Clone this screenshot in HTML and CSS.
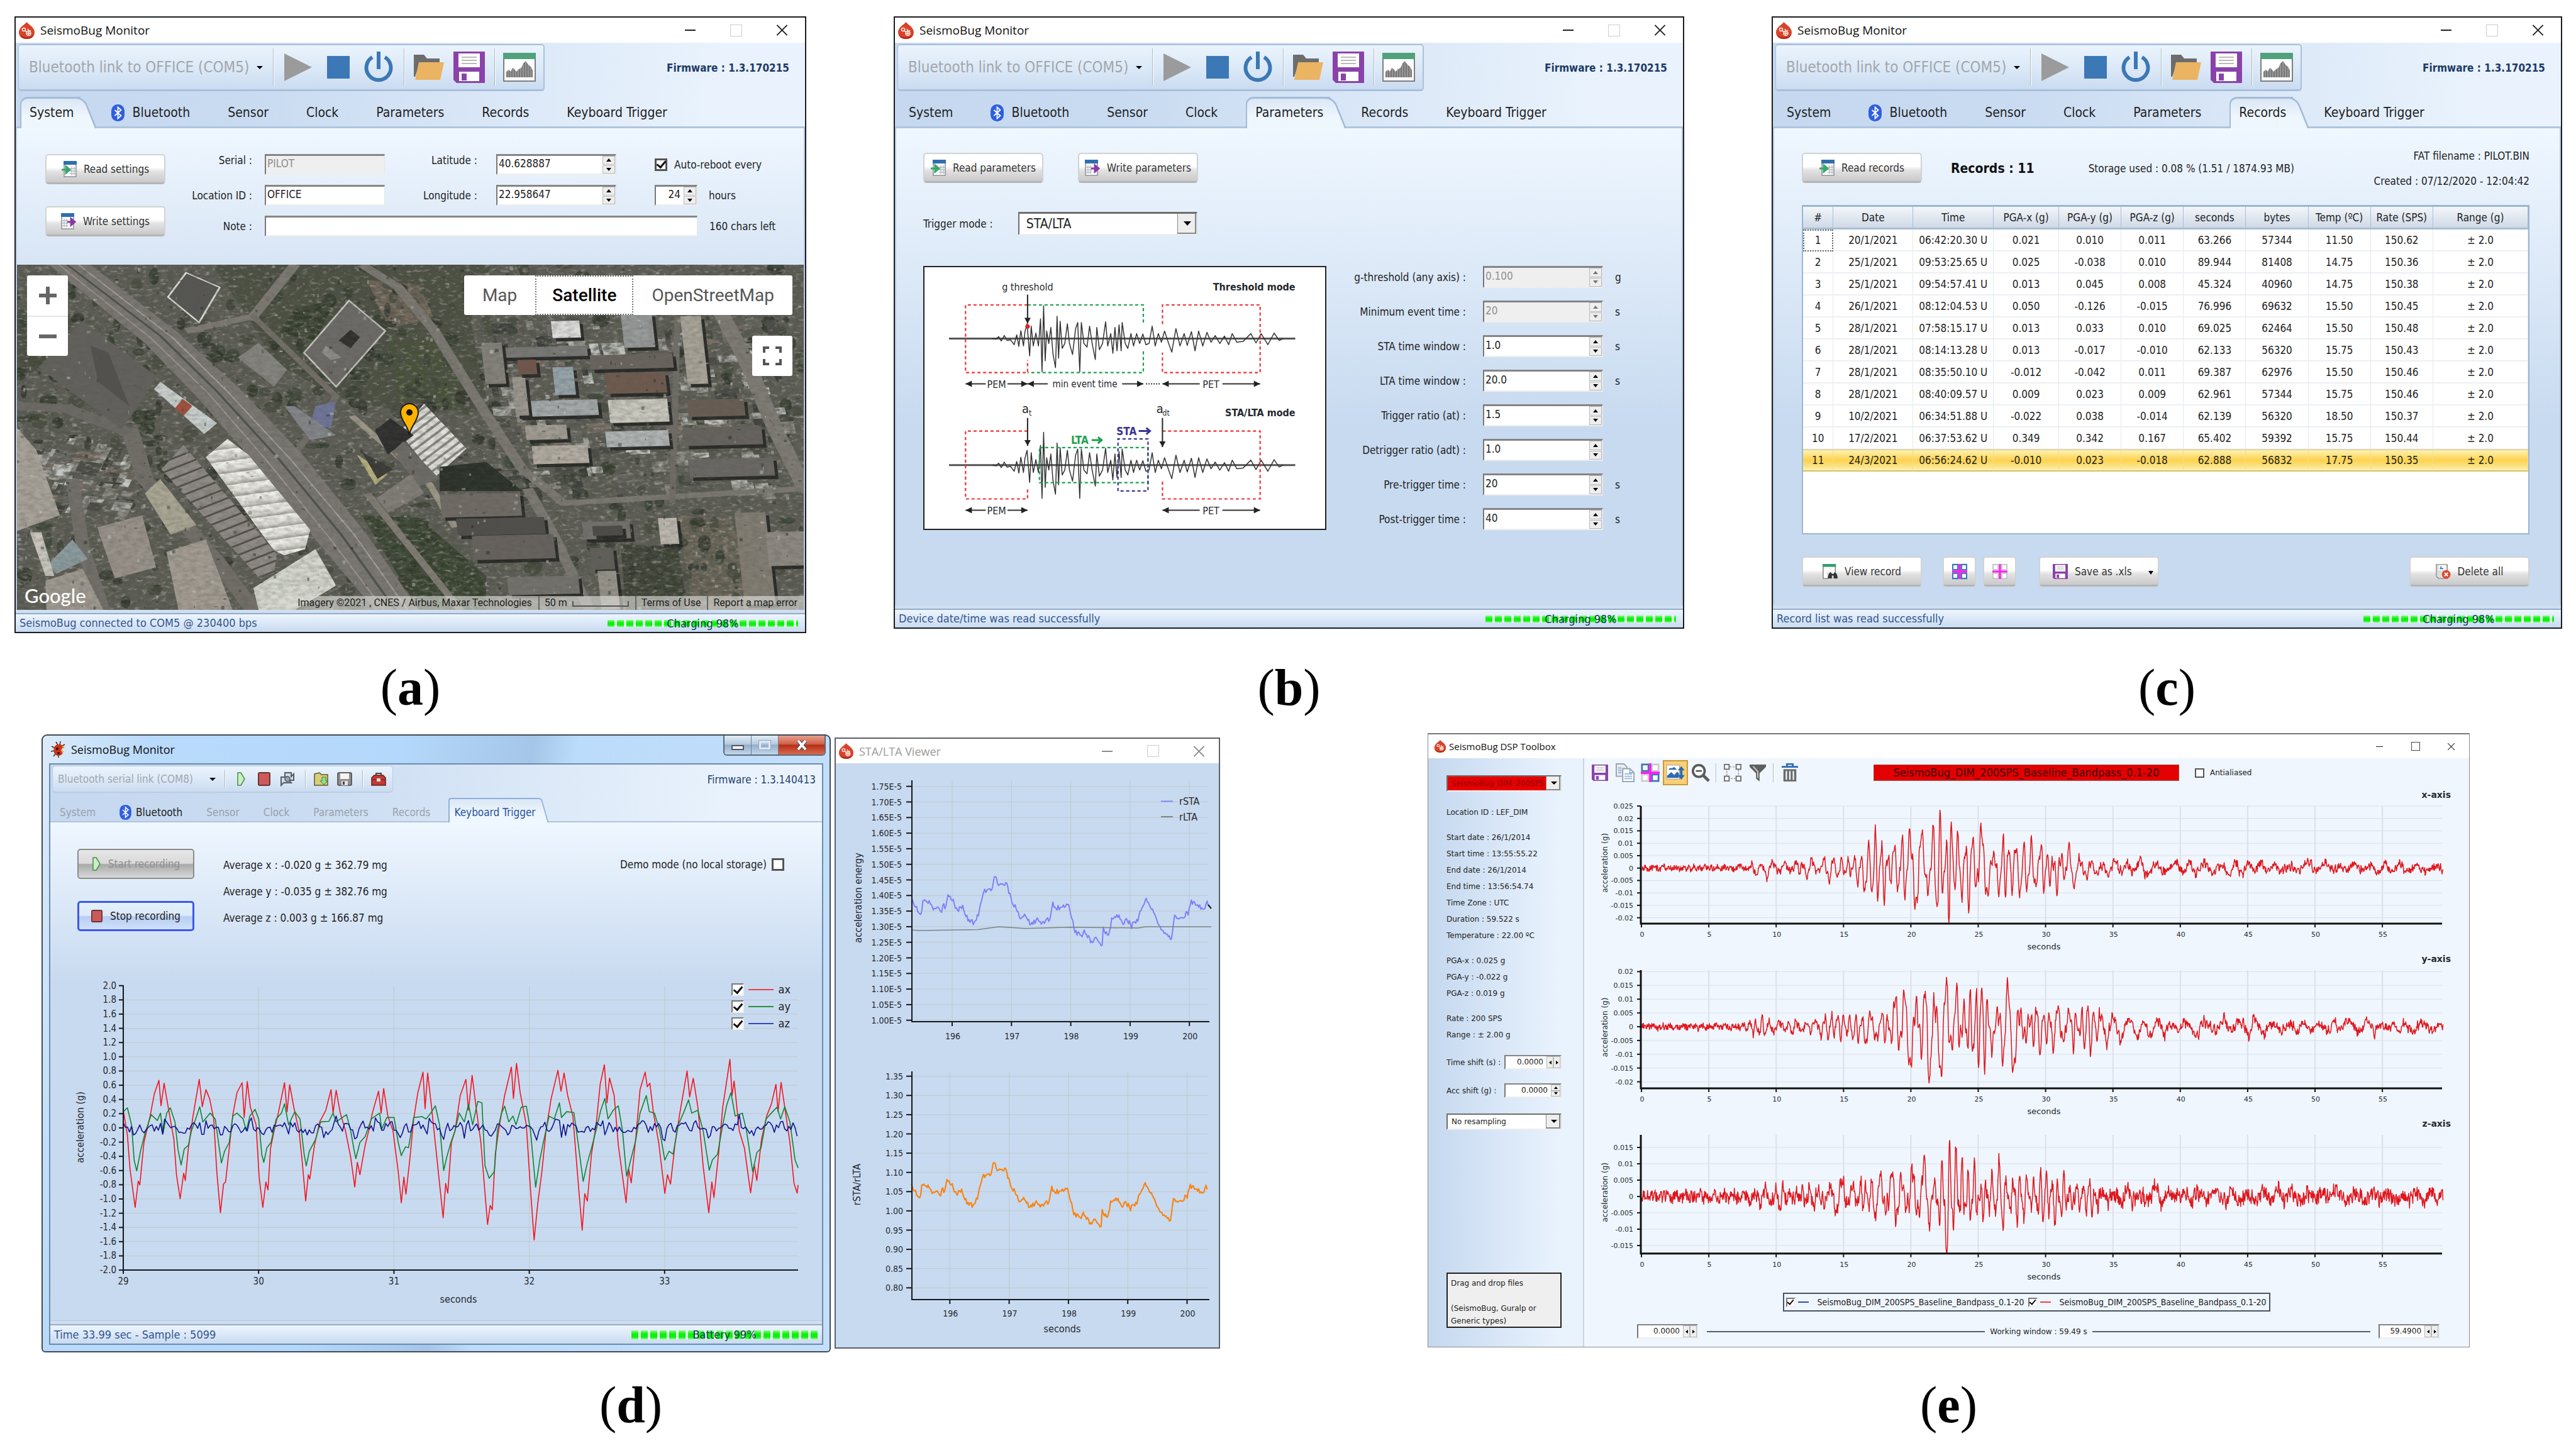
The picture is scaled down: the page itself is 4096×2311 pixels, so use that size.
FILE: index.html
```html
<!DOCTYPE html>
<html lang="en">
<head>
<meta charset="utf-8">
<title>SeismoBug software</title>
<link rel="stylesheet" href="styles.css">
</head>
<body>
<svg class="sprite" aria-hidden="true">
  <symbol id="i-logo" viewBox="0 0 27 27"><path d="M13.500 0C16 4 26 8 26 16.500C26 23 20.500 27 13.500 27S1 23 1 16.500C1 8 11 4 13.500 0Z" fill="#d8432a"/><path d="M2 19C5 26 22 26 25 19C24 24 20 27 13.500 27S3 24 2 19Z" fill="#b02c18"/><g fill="none" stroke="#ffe9e2" stroke-width="1.600"><circle cx="9" cy="12" r="2.500"/><circle cx="16.500" cy="18" r="3.500"/><path d="M11 14l3 2M15 11l2 3M20 13l-2 2M16.500 15v6M13.500 18h6"/></g></symbol>
  <symbol id="i-bug" viewBox="0 0 24 26"><path d="M8 1l3 5M15 0l-1 6M1 8l6 3M0 16l6-1M4 24l4-5M12 26v-4M22 5l-5 3" stroke="#4a2a18" stroke-width="1.500" fill="none"/><path d="M7 7c5-4 12-2 13 3c-4 2-5 5-1 9c-4 6-12 5-14-1c-1-4-1-8 2-11z" fill="#c8341c"/><circle cx="10" cy="12" r="2" fill="#2c0d05"/><circle cx="12" cy="19" r="2" fill="#2c0d05"/><path d="M18 8l3 3M16 14l4 3" stroke="#f0a030" stroke-width="2"/></symbol>
  <symbol id="i-bt" viewBox="0 0 21 27"><rect width="21" height="27" rx="10" fill="#2f5fe0"/><path d="M5.500 9l10 9-5 4.500V4.500l5 4.500-10 9" fill="none" stroke="#fff" stroke-width="1.800"/></symbol>
  <symbol id="i-play" viewBox="0 0 44 44"><path d="M0 0L44 22L0 44Z" fill="#9b9b9b"/></symbol>
  <symbol id="i-stop" viewBox="0 0 36 36"><rect width="36" height="36" fill="#3b78b5"/></symbol>
  <symbol id="i-power" viewBox="0 0 48 50"><path d="M14 9A19.500 19.500 0 1 0 34 9" fill="none" stroke="#3b78b5" stroke-width="6"/><path d="M24 0V28" stroke="#3b78b5" stroke-width="6"/></symbol>
  <symbol id="i-folder" viewBox="0 0 50 42"><path d="M1 1H17L22 7H42V16H10L3 36H1Z" fill="#6d6d6d"/><path d="M9 13H49L43 41H3Z" fill="#ebb462"/></symbol>
  <symbol id="i-floppy" viewBox="0 0 50 50"><path d="M0 0H50V50H5L0 45Z" fill="#8a42aa"/><rect x="8" y="3" width="34" height="22" fill="#fff"/><path d="M13 9H37M13 14H37M13 19H37" stroke="#bbb" stroke-width="2"/><rect x="9" y="32" width="32" height="15" fill="#fff"/><rect x="13" y="35" width="8" height="11" fill="#8a42aa"/></symbol>
  <symbol id="i-chart" viewBox="0 0 52 46"><rect x="1" y="1" width="50" height="44" fill="#fff" stroke="#7d7d7d" stroke-width="2"/><rect width="52" height="10" fill="#4fa27c"/><path d="M5 39V30L9 27L12 30L15 24L18 26L21 30L25 26L29 24L32 17L36 13L40 19L44 22L47 28V39Z" fill="#777"/><path d="M8 28V39M12 28V39M16 24V39M20 28V39M24 26V39M28 23V39M32 16V39M36 14V39M40 18V39M44 22V39" stroke="#b9b9b9" stroke-width="1"/></symbol>
  <symbol id="i-read" viewBox="0 0 24 26"><rect x="4" y="1" width="19" height="24" fill="#fff" stroke="#8a8f96" stroke-width="1.500"/><rect x="3" width="21" height="6" fill="#2f6eb0"/><path d="M16 9V23M20 9V23M13 12H22M13 16H22M13 20H22" stroke="#b7bcc2" stroke-width="1.300"/><path d="M0 14H9M7 9L13 14L7 19Z" stroke="#3aa66c" stroke-width="3" fill="#3aa66c"/></symbol>
  <symbol id="i-write" viewBox="0 0 24 26"><rect x="1" y="1" width="19" height="24" fill="#fff" stroke="#8a8f96" stroke-width="1.500"/><rect width="21" height="6" fill="#2f6eb0"/><path d="M5 9V23M9 9V23M2 12H11M2 16H11M2 20H11" stroke="#b7bcc2" stroke-width="1.300"/><path d="M10 14H18M16 9L22 14L16 19Z" stroke="#8a3aa6" stroke-width="3" fill="#8a3aa6"/></symbol>
  <symbol id="i-view" viewBox="0 0 26 26"><path d="M1 1H22V14M1 1V25H10" fill="#fff" stroke="#777" stroke-width="1.500"/><rect width="23" height="5" fill="#2f9e70"/><path d="M9 25C9 19 12 14 14 14L16 17H19L21 14C23 14 26 19 26 25H19V20H16V25Z" fill="#333"/></symbol>
  <symbol id="i-all" viewBox="0 0 26 26"><g fill="#fff" stroke="#3b78b5" stroke-width="2.500"><rect x="1" y="1" width="9" height="9"/><rect x="16" y="1" width="9" height="9"/><rect x="1" y="16" width="9" height="9"/><rect x="16" y="16" width="9" height="9"/></g><path d="M13 0V26M0 13H26" stroke="#ff1ef0" stroke-width="4"/></symbol>
  <symbol id="i-none" viewBox="0 0 26 26"><g fill="#fff" stroke="#c3c3c3" stroke-width="2"><rect x="1" y="1" width="9" height="9"/><rect x="16" y="1" width="9" height="9"/><rect x="1" y="16" width="9" height="9"/><rect x="16" y="16" width="9" height="9"/></g><path d="M13 0V26M0 13H26" stroke="#ff1ef0" stroke-width="3.500"/></symbol>
  <symbol id="i-del" viewBox="0 0 26 26"><path d="M1 1H20V25H5L1 21Z" fill="#ddd" stroke="#8c8c8c" stroke-width="1.500"/><rect x="5" y="2" width="12" height="9" fill="#fff"/><path d="M9 4v3M7 8h6" stroke="#3b78b5" stroke-width="2"/><circle cx="18" cy="18" r="7.500" fill="#d94a32"/><path d="M15 15L21 21M21 15L15 21" stroke="#fff" stroke-width="2"/></symbol>
  <symbol id="i-gplay" viewBox="0 0 14 22"><path d="M2 1L7 1L13 11L7 21H2Z" fill="#c9f0c0" stroke="#4c8a4c" stroke-width="1.500"/></symbol>
  <symbol id="i-rstop" viewBox="0 0 20 22"><rect x="1" y="1" width="18" height="20" rx="2" fill="#cc5a5a" stroke="#6a3434" stroke-width="2"/></symbol>
  <symbol id="i-link" viewBox="0 0 24 24"><path d="M8 2H18V8L22 4V14H14L18 18H6L2 22V9H8Z" fill="#d7dbe2" stroke="#555d68" stroke-width="2"/><circle cx="12" cy="12" r="4" fill="#9aa5b5" stroke="#47505c" stroke-width="1.500"/></symbol>
  <symbol id="i-open" viewBox="0 0 24 22"><path d="M1 3L9 1L12 4H22V21H1Z" fill="#d9cd78" stroke="#5f5a30" stroke-width="1.500"/><path d="M13 8V14H10L16 20L22 14H19V8Z" fill="#8fe08f" stroke="#3f7a3f"/></symbol>
  <symbol id="i-save" viewBox="0 0 24 22"><rect x="1" y="1" width="22" height="20" rx="2" fill="#8f8f8f" stroke="#444" stroke-width="1.500"/><rect x="5" y="2" width="14" height="9" fill="#f4f4f4"/><rect x="7" y="14" width="10" height="7" fill="#e4e4e4"/><rect x="9" y="15" width="3" height="5" fill="#444"/></symbol>
  <symbol id="i-tool" viewBox="0 0 24 22"><path d="M8 5V2H16V5" fill="none" stroke="#444" stroke-width="2"/><path d="M1 9L5 5H19L23 9V21H1Z" fill="#c23a32" stroke="#6b1d18" stroke-width="1.500"/><path d="M2 12H22" stroke="#6b1d18"/><rect x="9" y="10" width="6" height="5" fill="#ddd"/></symbol>
  <symbol id="i-copy" viewBox="0 0 32 32"><path d="M1 1H14L19 6V22H1Z" fill="#e9edf1" stroke="#9aa4ae" stroke-width="2"/><path d="M12 9H24L31 16V31H12Z" fill="#fff" stroke="#8fa0b2" stroke-width="2"/><path d="M24 9V16H31M15 18H28M15 22H28M15 26H28M4 8H10M4 12H10M4 16H10" fill="none" stroke="#93b4d6" stroke-width="2"/></symbol>
  <symbol id="i-quad" viewBox="0 0 32 32"><g fill="#fff" stroke-width="3"><rect x="2" y="2" width="11" height="11" stroke="#3b78b5"/><rect x="19" y="2" width="11" height="11" stroke="#ccc"/><rect x="2" y="19" width="11" height="11" stroke="#ccc"/><rect x="19" y="19" width="11" height="11" stroke="#3b78b5"/></g><path d="M16 0V32M0 16H32" stroke="#ff1ef0" stroke-width="4"/></symbol>
  <symbol id="i-fit" viewBox="0 0 32 28"><rect x="1" y="1" width="22" height="24" fill="#fff" stroke="#9a9a9a"/><path d="M2 23V19L9 13L14 18L19 12L22 15V23Z" fill="#2c6bb0"/><path d="M4 9C6 4 10 8 12 5C15 3 17 8 19 9Z" fill="#2c6bb0"/><path d="M26 3L32 10H28V18H32L26 26L20 18H24V10H20Z" fill="#2c6bb0"/></symbol>
  <symbol id="i-zoom" viewBox="0 0 32 32"><circle cx="13" cy="13" r="10" fill="#fff" stroke="#5c5c5c" stroke-width="4"/><path d="M8 13H18" stroke="#5c5c5c" stroke-width="3"/><path d="M20 20L30 30" stroke="#5c5c5c" stroke-width="5"/></symbol>
  <symbol id="i-nodes" viewBox="0 0 30 30"><path d="M5 5H25V25H5Z" fill="none" stroke="#8a8a8a" stroke-width="1.500" stroke-dasharray="3 2"/><g fill="#fff" stroke="#6f6f6f" stroke-width="2"><rect x="1" y="1" width="8" height="8"/><rect x="21" y="1" width="8" height="8"/><rect x="1" y="21" width="8" height="8"/><rect x="21" y="21" width="8" height="8"/></g></symbol>
  <symbol id="i-filter" viewBox="0 0 28 30"><path d="M0 1H28V5L17 16V30L11 25V16L0 5Z" fill="#5f5f5f"/><path d="M6 4L14 13V24" fill="none" stroke="#cfcfcf" stroke-width="2"/></symbol>
  <symbol id="i-trash" viewBox="0 0 28 32"><path d="M0 6H28M9 5V1H19V5" fill="none" stroke="#2c6bb0" stroke-width="3"/><path d="M3 10H25V31H3Z" fill="#6a6a6a"/><path d="M8 13V28M14 13V28M20 13V28" stroke="#eef5fd" stroke-width="2.500"/></symbol>
</svg>

<main class="page">
<div class="row top">

<figure class="fig">
  <section class="win">
    <header class="title"><svg class="logo"><use href="#i-logo"/></svg><h2>SeismoBug Monitor</h2>
      <div class="ctl"><button class="c-min" aria-label="Minimize"></button><button class="c-max" aria-label="Maximize" disabled></button><button class="c-x" aria-label="Close"></button></div></header>
    <div class="head">
      <div class="headline">
        <div class="tools"><span class="pick"><select aria-label="Port" disabled><option>Bluetooth link to OFFICE (COM5)</option></select></span><i class="sep"></i>
          <button aria-label="Play"><svg width="44" height="44"><use href="#i-play"/></svg></button><button aria-label="Stop"><svg width="36" height="36"><use href="#i-stop"/></svg></button><button aria-label="Power"><svg width="48" height="50"><use href="#i-power"/></svg></button><i class="sep"></i>
          <button aria-label="Open"><svg width="50" height="42"><use href="#i-folder"/></svg></button><button aria-label="Save"><svg width="50" height="50"><use href="#i-floppy"/></svg></button><i class="sep"></i>
          <button aria-label="Chart"><svg width="52" height="46"><use href="#i-chart"/></svg></button></div>
        <b class="fw">Firmware : 1.3.170215</b>
      </div>
      <nav class="tabs"><button class="on">System</button><button><svg class="bt"><use href="#i-bt"/></svg>Bluetooth</button><button>Sensor</button><button>Clock</button><button>Parameters</button><button>Records</button><button>Keyboard Trigger</button></nav>
    </div>
    <form class="panel sys">
      <div class="acts"><button type="button" class="btn"><svg class="ic"><use href="#i-read"/></svg>Read settings</button><button type="button" class="btn"><svg class="ic"><use href="#i-write"/></svg>Write settings</button></div>
      <div class="form">
        <label class="up" for="serial">Serial :</label><input id="serial" class="box" value="PILOT" disabled>
        <label class="up mid" for="lat">Latitude :</label><span class="spin"><input id="lat" value="40.628887"><span class="arr"><button type="button" aria-label="Up"></button><button type="button" aria-label="Down"></button></span></span>
        <label class="check"><input type="checkbox" checked>Auto-reboot every</label>
        <label for="loc">Location ID :</label><input id="loc" class="box" value="OFFICE">
        <label class="mid" for="lon">Longitude :</label><span class="spin"><input id="lon" value="22.958647"><span class="arr"><button type="button" aria-label="Up"></button><button type="button" aria-label="Down"></button></span></span>
        <div class="hours"><span class="spin small"><input id="hrs" value="24"><span class="arr"><button type="button" aria-label="Up"></button><button type="button" aria-label="Down"></button></span></span><label for="hrs">hours</label></div>
        <label for="note">Note :</label><div class="noterow"><input id="note" class="box"><span>160 chars left</span></div>
      </div>
    </form>
    <div class="map">
      <svg id="sat" viewBox="23 17 1521 1423" preserveAspectRatio="none" role="img" aria-label="Satellite map"></svg>
      <div class="zoomer"><button aria-label="Zoom in" class="plus"></button><button aria-label="Zoom out" class="minus"></button></div>
      <div class="types"><button>Map</button><button class="cur">Satellite</button><button>OpenStreetMap</button></div>
      <button class="full" aria-label="Full screen"><svg viewBox="0 0 30 30"><path d="M2 10V2H10M20 2H28V10M28 20V28H20M10 28H2V20" fill="none" stroke="#555" stroke-width="4"/></svg></button>
      <svg class="pin" viewBox="0 0 32 52"><path d="M16 51C15 38 2 28 2 15A14 14 0 0 1 30 15C30 28 17 38 16 51Z" fill="#ffb300" stroke="#1a1a1a" stroke-width="2"/><circle cx="16" cy="15" r="5" fill="#111"/></svg>
      <span class="goog">Google</span>
      <div class="attr"><span>Imagery ©2021 , CNES / Airbus, Maxar Technologies</span><span class="scale">50 m<i></i></span><a href="#terms">Terms of Use</a><a href="#report">Report a map error</a></div>
    </div>
    <footer class="status"><span>SeismoBug connected to COM5 @ 230400 bps</span><div class="meter"><b>Charging 98%</b></div></footer>
  </section>
  <figcaption>(<b>a</b>)</figcaption>
</figure>

<figure class="fig">
  <section class="win">
    <header class="title"><svg class="logo"><use href="#i-logo"/></svg><h2>SeismoBug Monitor</h2>
      <div class="ctl"><button class="c-min" aria-label="Minimize"></button><button class="c-max" aria-label="Maximize" disabled></button><button class="c-x" aria-label="Close"></button></div></header>
    <div class="head">
      <div class="headline">
        <div class="tools"><span class="pick"><select aria-label="Port" disabled><option>Bluetooth link to OFFICE (COM5)</option></select></span><i class="sep"></i>
          <button aria-label="Play"><svg width="44" height="44"><use href="#i-play"/></svg></button><button aria-label="Stop"><svg width="36" height="36"><use href="#i-stop"/></svg></button><button aria-label="Power"><svg width="48" height="50"><use href="#i-power"/></svg></button><i class="sep"></i>
          <button aria-label="Open"><svg width="50" height="42"><use href="#i-folder"/></svg></button><button aria-label="Save"><svg width="50" height="50"><use href="#i-floppy"/></svg></button><i class="sep"></i>
          <button aria-label="Chart"><svg width="52" height="46"><use href="#i-chart"/></svg></button></div>
        <b class="fw">Firmware : 1.3.170215</b>
      </div>
      <nav class="tabs"><button>System</button><button><svg class="bt"><use href="#i-bt"/></svg>Bluetooth</button><button>Sensor</button><button>Clock</button><button class="on">Parameters</button><button>Records</button><button>Keyboard Trigger</button></nav>
    </div>
    <form class="panel par">
      <div class="acts"><button type="button" class="btn"><svg class="ic"><use href="#i-read"/></svg>Read parameters</button><button type="button" class="btn"><svg class="ic"><use href="#i-write"/></svg>Write parameters</button></div>
      <div class="mode"><label for="tm">Trigger mode :</label><span class="drop"><select id="tm"><option>STA/LTA</option></select></span></div>
      <div class="split">
        <svg id="diagram" class="diagram" viewBox="49 399 637 416" role="img" aria-label="Trigger modes"></svg>
        <div class="values" id="values">
          <label for="p1">g-threshold (any axis) :</label><span class="spin off"><input id="p1" value="0.100" disabled><span class="arr"><button type="button" aria-label="Up"></button><button type="button" aria-label="Down"></button></span></span><span>g</span>
          <label for="p2">Minimum event time :</label><span class="spin off"><input id="p2" value="20" disabled><span class="arr"><button type="button" aria-label="Up"></button><button type="button" aria-label="Down"></button></span></span><span>s</span>
          <label for="p3">STA time window :</label><span class="spin"><input id="p3" value="1.0"><span class="arr"><button type="button" aria-label="Up"></button><button type="button" aria-label="Down"></button></span></span><span>s</span>
          <label for="p4">LTA time window :</label><span class="spin"><input id="p4" value="20.0"><span class="arr"><button type="button" aria-label="Up"></button><button type="button" aria-label="Down"></button></span></span><span>s</span>
          <label for="p5">Trigger ratio (at) :</label><span class="spin"><input id="p5" value="1.5"><span class="arr"><button type="button" aria-label="Up"></button><button type="button" aria-label="Down"></button></span></span><span></span>
          <label for="p6">Detrigger ratio (adt) :</label><span class="spin"><input id="p6" value="1.0"><span class="arr"><button type="button" aria-label="Up"></button><button type="button" aria-label="Down"></button></span></span><span></span>
          <label for="p7">Pre-trigger time :</label><span class="spin"><input id="p7" value="20"><span class="arr"><button type="button" aria-label="Up"></button><button type="button" aria-label="Down"></button></span></span><span>s</span>
          <label for="p8">Post-trigger time :</label><span class="spin"><input id="p8" value="40"><span class="arr"><button type="button" aria-label="Up"></button><button type="button" aria-label="Down"></button></span></span><span>s</span>
        </div>
      </div>
    </form>
    <footer class="status"><span>Device date/time was read successfully</span><div class="meter"><b>Charging 98%</b></div></footer>
  </section>
  <figcaption>(<b>b</b>)</figcaption>
</figure>

<figure class="fig">
  <section class="win">
    <header class="title"><svg class="logo"><use href="#i-logo"/></svg><h2>SeismoBug Monitor</h2>
      <div class="ctl"><button class="c-min" aria-label="Minimize"></button><button class="c-max" aria-label="Maximize" disabled></button><button class="c-x" aria-label="Close"></button></div></header>
    <div class="head">
      <div class="headline">
        <div class="tools"><span class="pick"><select aria-label="Port" disabled><option>Bluetooth link to OFFICE (COM5)</option></select></span><i class="sep"></i>
          <button aria-label="Play"><svg width="44" height="44"><use href="#i-play"/></svg></button><button aria-label="Stop"><svg width="36" height="36"><use href="#i-stop"/></svg></button><button aria-label="Power"><svg width="48" height="50"><use href="#i-power"/></svg></button><i class="sep"></i>
          <button aria-label="Open"><svg width="50" height="42"><use href="#i-folder"/></svg></button><button aria-label="Save"><svg width="50" height="50"><use href="#i-floppy"/></svg></button><i class="sep"></i>
          <button aria-label="Chart"><svg width="52" height="46"><use href="#i-chart"/></svg></button></div>
        <b class="fw">Firmware : 1.3.170215</b>
      </div>
      <nav class="tabs"><button>System</button><button><svg class="bt"><use href="#i-bt"/></svg>Bluetooth</button><button>Sensor</button><button>Clock</button><button>Parameters</button><button class="on">Records</button><button>Keyboard Trigger</button></nav>
    </div>
    <div class="panel rec">
      <div class="rechead"><button class="btn"><svg class="ic"><use href="#i-read"/></svg>Read records</button><b class="count">Records : 11</b><span class="used">Storage used : 0.08 % (1.51 / 1874.93 MB)</span><div class="fat"><span>FAT filename : PILOT.BIN</span><span>Created : 07/12/2020 - 12:04:42</span></div></div>
      <div class="grid"><table>
        <colgroup><col style="width:4.2%"><col style="width:11%"><col style="width:11.1%"><col style="width:9%"><col style="width:8.6%"><col style="width:8.6%"><col style="width:8.6%"><col style="width:8.6%"><col style="width:8.6%"><col style="width:8.6%"><col></colgroup>
        <thead><tr><th>#</th><th>Date</th><th>Time</th><th>PGA-x (g)</th><th>PGA-y (g)</th><th>PGA-z (g)</th><th>seconds</th><th>bytes</th><th>Temp (ºC)</th><th>Rate (SPS)</th><th>Range (g)</th></tr></thead>
        <tbody>
        <tr><td class="focus">1</td><td>20/1/2021</td><td>06:42:20.30 U</td><td>0.021</td><td>0.010</td><td>0.011</td><td>63.266</td><td>57344</td><td>11.50</td><td>150.62</td><td>± 2.0</td></tr>
        <tr><td>2</td><td>25/1/2021</td><td>09:53:25.65 U</td><td>0.025</td><td>-0.038</td><td>0.010</td><td>89.944</td><td>81408</td><td>14.75</td><td>150.36</td><td>± 2.0</td></tr>
        <tr><td>3</td><td>25/1/2021</td><td>09:54:57.41 U</td><td>0.013</td><td>0.045</td><td>0.008</td><td>45.324</td><td>40960</td><td>14.75</td><td>150.38</td><td>± 2.0</td></tr>
        <tr><td>4</td><td>26/1/2021</td><td>08:12:04.53 U</td><td>0.050</td><td>-0.126</td><td>-0.015</td><td>76.996</td><td>69632</td><td>15.50</td><td>150.45</td><td>± 2.0</td></tr>
        <tr><td>5</td><td>28/1/2021</td><td>07:58:15.17 U</td><td>0.013</td><td>0.033</td><td>0.010</td><td>69.025</td><td>62464</td><td>15.50</td><td>150.48</td><td>± 2.0</td></tr>
        <tr><td>6</td><td>28/1/2021</td><td>08:14:13.28 U</td><td>0.013</td><td>-0.017</td><td>-0.010</td><td>62.133</td><td>56320</td><td>15.75</td><td>150.43</td><td>± 2.0</td></tr>
        <tr><td>7</td><td>28/1/2021</td><td>08:35:50.10 U</td><td>-0.012</td><td>-0.042</td><td>0.011</td><td>69.387</td><td>62976</td><td>15.50</td><td>150.46</td><td>± 2.0</td></tr>
        <tr><td>8</td><td>28/1/2021</td><td>08:40:09.57 U</td><td>0.009</td><td>0.023</td><td>0.009</td><td>62.961</td><td>57344</td><td>15.75</td><td>150.46</td><td>± 2.0</td></tr>
        <tr><td>9</td><td>10/2/2021</td><td>06:34:51.88 U</td><td>-0.022</td><td>0.038</td><td>-0.014</td><td>62.139</td><td>56320</td><td>18.50</td><td>150.37</td><td>± 2.0</td></tr>
        <tr><td>10</td><td>17/2/2021</td><td>06:37:53.62 U</td><td>0.349</td><td>0.342</td><td>0.167</td><td>65.402</td><td>59392</td><td>15.75</td><td>150.44</td><td>± 2.0</td></tr>
        <tr class="sel"><td>11</td><td>24/3/2021</td><td>06:56:24.62 U</td><td>-0.010</td><td>0.023</td><td>-0.018</td><td>62.888</td><td>56832</td><td>17.75</td><td>150.35</td><td>± 2.0</td></tr>
        </tbody></table></div>
      <div class="recfoot"><button class="btn"><svg class="ic"><use href="#i-view"/></svg>View record</button><button class="btn sq first" aria-label="Select all"><svg class="ic"><use href="#i-all"/></svg></button><button class="btn sq" aria-label="Select none"><svg class="ic"><use href="#i-none"/></svg></button><button class="btn more"><svg class="ic"><use href="#i-floppy"/></svg>Save as .xls<i class="tri"></i></button><button class="btn last"><svg class="ic"><use href="#i-del"/></svg>Delete all</button></div>
    </div>
    <footer class="status"><span>Record list was read successfully</span><div class="meter"><b>Charging 98%</b></div></footer>
  </section>
  <figcaption>(<b>c</b>)</figcaption>
</figure>
</div>

<div class="row bottom">
<figure class="fig">
  <div class="pair">
  <section class="aero">
    <header class="title"><svg class="logo"><use href="#i-bug"/></svg><h2>SeismoBug Monitor</h2><div class="actl"><button aria-label="Minimize"><i class="a-min"></i></button><button aria-label="Maximize"><i class="a-max"></i></button><button class="a-x" aria-label="Close"><svg viewBox="0 0 16 16"><path d="M2 1L14 15M14 1L2 15" stroke="#445" stroke-width="6"/><path d="M2 1L14 15M14 1L2 15" stroke="#fff" stroke-width="4"/></svg></button></div></header>
    <div class="inner">
      <div class="head">
        <div class="headline">
          <div class="tools"><span class="pick"><select aria-label="Port" disabled><option>Bluetooth serial link (COM8)</option></select></span><i class="sep"></i>
            <button aria-label="Play"><svg width="14" height="22"><use href="#i-gplay"/></svg></button><button aria-label="Stop"><svg width="20" height="22"><use href="#i-rstop"/></svg></button><button aria-label="Link"><svg width="24" height="24"><use href="#i-link"/></svg></button><i class="sep"></i>
            <button aria-label="Open"><svg width="24" height="22"><use href="#i-open"/></svg></button><button aria-label="Save"><svg width="24" height="22"><use href="#i-save"/></svg></button><i class="sep"></i>
            <button aria-label="Toolbox"><svg width="24" height="22"><use href="#i-tool"/></svg></button></div>
          <span class="fw">Firmware : 1.3.140413</span>
        </div>
        <nav class="tabs"><button class="dim">System</button><button><svg class="bt"><use href="#i-bt"/></svg>Bluetooth</button><button class="dim">Sensor</button><button class="dim">Clock</button><button class="dim">Parameters</button><button class="dim">Records</button><button class="on">Keyboard Trigger</button></nav>
      </div>
      <div class="panel key">
        <div class="keytop">
          <div class="acts"><button class="btn gray" disabled><svg width="14" height="24"><use href="#i-gplay"/></svg>Start recording</button><button class="btn blue"><svg width="18" height="20"><use href="#i-rstop"/></svg>Stop recording</button></div>
          <div class="avgs"><span>Average x : -0.020 g ± 362.79 mg</span><span>Average y : -0.035 g ± 382.76 mg</span><span>Average z : 0.003 g ± 166.87 mg</span></div>
          <label class="check demo">Demo mode (no local storage)<input type="checkbox"></label>
        </div>
        <div class="chartbox"><svg id="key" viewBox="14 386 1227 546" role="img" aria-label="Acceleration"></svg>
          <div class="legend"><label><input type="checkbox" checked><i class="l-red"></i>ax</label><label><input type="checkbox" checked><i class="l-green"></i>ay</label><label><input type="checkbox" checked><i class="l-blue"></i>az</label></div></div>
      </div>
      <footer class="status"><span>Time 33.99 sec - Sample : 5099</span><div class="meter"><b>Battery 99%</b></div></footer>
    </div>
  </section>
  <section class="win sta">
    <header class="title"><svg class="logo"><use href="#i-logo"/></svg><h2>STA/LTA Viewer</h2><div class="ctl"><button class="c-min" aria-label="Minimize"></button><button class="c-max" aria-label="Maximize" disabled></button><button class="c-x" aria-label="Close"></button></div></header>
    <svg id="sta" viewBox="2 41 609 929" role="img" aria-label="STA and LTA"></svg>
  </section>
  </div>
  <figcaption>(<b>d</b>)</figcaption>
</figure>

<figure class="fig">
  <section class="win dsp">
    <header class="title"><svg class="logo"><use href="#i-logo"/></svg><h2>SeismoBug DSP Toolbox</h2><div class="ctl"><button class="c-min" aria-label="Minimize"></button><button class="c-max" aria-label="Maximize"></button><button class="c-x" aria-label="Close"></button></div></header>
    <div class="dspbody">
      <aside>
        <span class="drop red"><select aria-label="Record"><option>SeismoBug_DIM_200SPS_</option></select></span>
        <p>Location ID : LEF_DIM</p>
        <p>Start date : 26/1/2014<br>Start time : 13:55:55.22<br>End date : 26/1/2014<br>End time : 13:56:54.74<br>Time Zone : UTC<br>Duration : 59.522 s<br>Temperature : 22.00 ºC</p>
        <p>PGA-x : 0.025 g<br>PGA-y : -0.022 g<br>PGA-z : 0.019 g</p>
        <p>Rate : 200 SPS<br>Range : ± 2.00 g</p>
        <div class="shift"><label for="ts">Time shift (s) :</label><span class="spin side"><input id="ts" value="0.0000"><span class="arr"><button aria-label="Less"></button><button aria-label="More"></button></span></span></div>
        <div class="shift"><label for="as">Acc shift (g) :</label><span class="spin"><input id="as" value="0.0000"><span class="arr"><button aria-label="Up"></button><button aria-label="Down"></button></span></span></div>
        <span class="drop res"><select aria-label="Resampling"><option>No resampling</option></select></span>
        <div class="dnd">Drag and drop files<br><br>(SeismoBug, Guralp or<br>Generic types)</div>
      </aside>
      <div class="dspmain">
        <div class="dsptools"><button aria-label="Save"><svg width="26" height="26"><use href="#i-floppy"/></svg></button><button aria-label="Copy"><svg width="30" height="30"><use href="#i-copy"/></svg></button><button aria-label="Grid"><svg width="30" height="30"><use href="#i-quad"/></svg></button><button class="act" aria-label="Fit"><svg width="30" height="26"><use href="#i-fit"/></svg></button><button aria-label="Zoom out"><svg width="30" height="30"><use href="#i-zoom"/></svg></button><i class="sep"></i><button aria-label="Select"><svg width="28" height="28"><use href="#i-nodes"/></svg></button><button aria-label="Filter"><svg width="26" height="28"><use href="#i-filter"/></svg></button><i class="sep"></i><button aria-label="Delete"><svg width="26" height="30"><use href="#i-trash"/></svg></button>
          <span class="redbar">SeismoBug_DIM_200SPS_Baseline_Bandpass_0.1-20</span><label class="check"><input type="checkbox">Antialiased</label></div>
        <svg id="dsp" viewBox="249 86 1407 794" role="img" aria-label="Acceleration records"></svg>
        <div class="dsplegend"><label><input type="checkbox" checked><i class="l-blue"></i>SeismoBug_DIM_200SPS_Baseline_Bandpass_0.1-20</label><label><input type="checkbox" checked><i class="l-red"></i>SeismoBug_DIM_200SPS_Baseline_Bandpass_0.1-20</label></div>
        <div class="range"><span class="spin side"><input aria-label="From" value="0.0000"><span class="arr"><button aria-label="Less"></button><button aria-label="More"></button></span></span><i></i><span>Working window : 59.49 s</span><i></i><span class="spin side"><input aria-label="To" value="59.4900"><span class="arr"><button aria-label="Less"></button><button aria-label="More"></button></span></span></div>
      </div>
    </div>
  </section>
  <figcaption>(<b>e</b>)</figcaption>
</figure>
</div>
</main>
<script src="charts.js"></script>
</body>
</html>
```

FILE: styles.css
```css
* { box-sizing: border-box; }
body { margin: 0; background: #fff; color: #222; font: 17px/20px "DejaVu Sans Condensed", "DejaVu Sans", sans-serif; }
button, input, select { font: inherit; color: inherit; margin: 0; padding: 0; border: 0; background: none; border-radius: 0; }
button svg, .title svg { display: block; flex: none; }
i { font-style: normal; }
.sprite { position: absolute; width: 0; height: 0; }
.page { min-height: 100vh; }

/* figure rows */
.row { display: grid; }
.top { grid-template-columns: 1259fr 1257fr 1257fr; column-gap: 139px; padding: 26px 22px 0 23px; }
.bottom { grid-template-columns: 1874fr 1657fr; column-gap: 330px; padding: 22px 169px 0 66px; }
.pair { display: grid; grid-template-columns: 1255fr 613fr; column-gap: 6px; align-items: start; padding-top: 2px; }
.fig { margin: 0; display: flex; flex-direction: column; min-width: 0; }
figcaption { margin-top: auto; padding-top: 37px; text-align: center; font: 82px/100px "Liberation Serif", serif; color: #000; }
.bottom figcaption { padding-top: 34px; }

/* window chrome */
.win { border: 2px solid #1b1d20; background: #fff; display: flex; flex-direction: column; min-width: 0; }
.title { height: 40px; display: flex; align-items: center; padding-left: 4px; gap: 8px; background: #fff; }
.title h2 { margin: 0; font: 19px/24px "Open Sans", sans-serif; color: #111; flex: 1; white-space: nowrap; }
.logo { width: 27px; height: 27px; }
.ctl { display: flex; align-self: stretch; }
.ctl button { width: 73px; display: grid; place-items: center; }
.c-min::before { content: ""; width: 17px; height: 2px; background: #222; }
.c-max::before { content: ""; width: 17px; height: 17px; border: 1px solid #ccc; }
.c-x::before, .c-x::after { content: ""; grid-area: 1/1; width: 23px; height: 2px; background: #222; transform: rotate(45deg); }
.c-x::after { transform: rotate(-45deg); }

.head { background: linear-gradient(90deg, #c5d8ef 0, #c9dbf1 30%, #eaf3fd 90%); padding-top: 2px; }
.headline { display: flex; align-items: center; justify-content: space-between; padding: 0 25px 0 4px; }
.tools { display: flex; align-items: center; height: 75px; padding: 0 6px 0 16px; border: 1px solid #a9c0dc; border-width: 2px 2px 3px 1px; border-radius: 5px; background: linear-gradient(#ebf4fd, #dce9f7 50%, #cbdcf1); }
.tools button { width: 64px; display: grid; place-items: center; }
.sep { width: 2px; height: 60px; margin: 0 6px 0 8px; background: #adb6c0; border-right: 1px solid #fff; }
.pick, .drop { position: relative; display: block; }
.pick select { width: 380px; font-size: 24px; line-height: 30px; color: #a3a6ab; opacity: 1; appearance: none; display: block; }
.pick::after, .drop::after { content: ""; position: absolute; right: 8px; top: 50%; margin-top: -2px; border: 5px solid transparent; border-top-color: #000; border-bottom: 0; pointer-events: none; }
.fw { color: #1d3a66; white-space: nowrap; }

.tabs { display: flex; margin-top: 9px; height: 50px; padding-left: 7px; border-bottom: 3px solid #afc5dd; }
.tabs button { position: relative; z-index: 0; height: 50px; padding: 0 45px 0 15px; font-size: 21px; color: #222; display: flex; align-items: center; gap: 12px; white-space: nowrap; }
.bt { width: 21px; height: 27px; }
.tabs .on::before { content: ""; position: absolute; z-index: -1; inset: 0 34px 0 0; background: linear-gradient(#dbe7f5, #eef6fe 60%); border: 2px solid #a3bbd6; border-top-width: 3px; border-right: 0; border-bottom: 0; border-radius: 12px 0 0 0; }
.tabs .on::after { content: ""; position: absolute; z-index: -1; top: 0; bottom: 0; right: 18px; width: 36px; background: linear-gradient(#dbe7f5, #eef6fe 60%); border: 3px solid #a3bbd6; border-left: 0; border-bottom: 0; border-radius: 0 14px 0 0; transform: skewX(22deg); }

.panel { background: linear-gradient(#eff7ff, #c8daf0 62%); margin: 0; border: 1px solid #b4c8e0; border-width: 0 2px; flex: 1; }
.btn { width: 191px; height: 48px; display: flex; align-items: center; justify-content: center; gap: 11px; white-space: nowrap; border: 2px solid #d2d2d2; border-bottom: 3px solid #b5b5b5; border-radius: 5px; background: linear-gradient(#fff 45%, #e2e2e2 60%, #c9c9c9); color: #333; }
.ic { width: 24px; height: 26px; }
.box { width: 100%; min-width: 0; height: 33px; background: #fff; border: 2px solid #777; border-width: 3px 1px 2px 2px; border-color: #858585 #e6e6e6 #eee #777; padding: 0 2px 4px; }
.box:disabled { background: #efefef; color: #8d8d8d; }
.spin { display: flex; width: 191px; height: 33px; background: #fff; border: 2px solid #777; border-width: 3px 2px 2px 2px; border-color: #858585 #e6e6e6 #eee #777; }
.spin input { flex: 1; min-width: 0; padding: 0 2px 5px; }
.spin.off { background: #efefef; color: #909090; }
.arr { display: flex; flex-direction: column; width: 20px; gap: 1px; }
.arr button { flex: 1; background: #eee; border: 1px solid #b8b8b8; display: grid; place-items: center; }
.arr button::before { content: ""; border: 4px solid transparent; border-top: 0; border-bottom: 5px solid #000; }
.arr button + button::before { transform: rotate(180deg); }
.off .arr button::before { opacity: .5; }
input[type=checkbox] { appearance: none; width: 20px; height: 20px; background: #fff; border: 3px solid #555; flex: none; display: grid; place-items: center; }
input[type=checkbox]:checked::before { content: ""; width: 6px; height: 11px; border: solid #111; border-width: 0 3px 3px 0; transform: rotate(40deg); margin-top: -3px; }
.check { display: flex; align-items: center; gap: 11px; white-space: nowrap; }

.status { display: flex; align-items: center; justify-content: space-between; height: 30px; padding: 0 11px 0 6px; margin-top: 5px; background: linear-gradient(#edf5fe, #c9dbf1); border-top: 2px solid #94abc8; outline: 5px solid #cfdff1; outline-offset: 0; clip-path: inset(-5px 0 0 0); color: #34568e; font-size: 18px; white-space: nowrap; }
.meter { position: relative; width: 303px; height: 11px; background: linear-gradient(rgba(255, 255, 255, .55), transparent 40% 75%, rgba(255, 255, 255, .5)), repeating-linear-gradient(90deg, #0cf20c 0 11px, #dcf3e4 11px 15px); color: #123c5c; }
.meter b { position: absolute; inset: -4px 0; text-align: center; line-height: 20px; font-size: 18px; font-weight: normal; }

/* system */
.sys { background: linear-gradient(#eff7ff, #d8e5f5); height: 217px; flex: none; padding: 41px 0 0 45px; display: flex; }
.sys .acts { display: flex; flex-direction: column; gap: 35px; }
.form { flex: 1; display: grid; grid-template-columns: 138px 191px 137px 191px 1fr; gap: 16px 20px; align-content: start; align-items: center; }
.form > label { text-align: right; white-space: nowrap; }
.form .mid { padding-right: 10px; }
.form .up { align-self: start; }
.form .check { padding-left: 41px; }
.hours { display: flex; align-items: center; gap: 18px; padding-left: 41px; }
.small { width: 68px; }
.small input { text-align: right; padding-right: 5px; }
.noterow { grid-column: 2 / 6; display: flex; align-items: center; gap: 19px; white-space: nowrap; }
.noterow .box { width: 688px; }

/* map */
.map { position: relative; height: 549px; border: 1px solid #b4c8e0; border-width: 0 2px; overflow: hidden; font-family: Roboto, sans-serif; }
#sat { display: block; width: 100%; height: 100%; }
.zoomer { position: absolute; left: 16px; top: 17px; width: 65px; background: #fff; border-radius: 3px; }
.zoomer button { display: grid; place-items: center; width: 65px; height: 64px; }
.zoomer .minus { border-top: 2px solid #e6e6e6; }
.plus::before, .minus::before { content: ""; grid-area: 1/1; width: 28px; height: 6px; background: #666; }
.plus::after { content: ""; grid-area: 1/1; width: 6px; height: 28px; background: #666; }
.types { position: absolute; right: 18px; top: 17px; height: 63px; background: #fff; display: flex; border-radius: 3px; font-size: 28px; }
.types button { padding: 0 29px; color: #565656; }
.types .cur { padding: 0 25px; color: #000; font-weight: 500; border: 2px dotted #777; }
.full { position: absolute; right: 18px; top: 113px; width: 64px; height: 64px; background: #fff; border-radius: 3px; padding: 17px; }
.pin { position: absolute; left: 608px; top: 219px; width: 32px; height: 54px; }
.goog { position: absolute; left: 12px; bottom: 6px; color: #fff; font: 500 31px/34px Lato, sans-serif; }
.attr { position: absolute; right: 0; bottom: 0; height: 22px; padding: 0 10px; display: flex; gap: 10px; background: linear-gradient(90deg, transparent, rgba(225, 225, 220, .62) 12%); padding-left: 70px; font-size: 16px; line-height: 22px; color: #222; white-space: nowrap; }
.attr > * + * { border-left: 2px solid #666; padding-left: 8px; color: inherit; text-decoration: none; }
.scale { display: flex; gap: 8px; }
.scale i { width: 90px; height: 9px; margin-top: 8px; border: 2px solid #555; border-top: 0; }

/* parameters */
.par { padding: 39px 0 120px 43px; }
.par .acts { display: flex; gap: 55px; }
.mode { display: flex; align-items: center; gap: 40px; margin-top: 46px; }
.drop { width: 285px; height: 37px; background: #fff; border: 2px solid #777; border-width: 3px 2px 2px 2px; border-color: #6e6e6e #e0e0e0 #eee #6e6e6e; }
.drop select { appearance: none; width: 100%; height: 100%; padding-left: 11px; font-size: 21px; display: block; }
.drop::after { right: 8px; margin-top: -4px; border-width: 7px 6px 0; z-index: 1; }
.drop::before { content: ""; position: absolute; right: 0; top: 0; bottom: 0; width: 27px; background: #eee; border: 2px solid #888; border-width: 0 2px 2px 1px; pointer-events: none; }
.split { display: flex; margin-top: 49px; }
.diagram { flex: none; width: 641px; height: 420px; background: #fff; border: 2px solid #222; }
.values { flex: 1; display: grid; grid-template-columns: 222px 191px 1fr; grid-auto-rows: 35px; row-gap: 20px; column-gap: 27px; align-items: center; text-align: right; white-space: nowrap; }
.values .spin { height: 35px; }
.values > span:nth-child(3n) { text-align: left; margin-left: -8px; }

/* records */
.rec { padding: 39px 48px 30px 44px; }
.rechead { display: flex; height: 83px; align-items: flex-start; }
.rechead > * + * { line-height: 50px; white-space: nowrap; }
.count { font-size: 21px; color: #111; margin-left: 46px; }
.used { margin-left: 86px; }
.rechead .fat { margin-left: auto; margin-top: -5px; display: grid; row-gap: 20px; line-height: 20px; text-align: right; }
.grid { height: 524px; background: #fff; border: 2px solid #9bb5d2; border-top-width: 3px; }
table { width: 100%; table-layout: fixed; border-collapse: separate; border-spacing: 0; text-align: center; }
th { font-weight: normal; height: 36px; padding: 0; background: linear-gradient(#f3f6fa, #cfd9e6); border-right: 1px solid #a9bdd4; border-bottom: 3px solid #a9bdd4; white-space: nowrap; }
td { height: 35px; padding: 0; border-right: 1px solid #e4e8ee; border-bottom: 2px solid #eceff3; white-space: nowrap; }
td.focus { outline: 2px dotted #666; outline-offset: -2px; }
.sel td { background: linear-gradient(#fdf3b4, #fdd24e 50%, #fbe384 80%, #fdf3b4); border-top: 1px solid #d8bd60; border-bottom: 2px solid #d8bd60; border-right-color: #f4dd8d; }
.recfoot { display: flex; margin-top: 35px; }
.sq { width: 53px; margin-left: 11px; }
.sq.first { margin-left: 33px; }
.more { margin-left: 36px; position: relative; justify-content: flex-start; padding-left: 20px; }
.tri { position: absolute; right: 7px; top: 21px; border: 4px solid transparent; border-top: 6px solid #000; border-bottom: 0; }
.last { margin-left: auto; }

/* keyboard trigger */
.aero { border: 2px solid #3f4b57; border-radius: 9px 9px 6px 6px; padding: 0 10px 10px; background: linear-gradient(100deg, #dcebfa 0, #b9dafb 12%, #b4d8fb 40%, #a5c6e8 55%, #bcdcfb 60%, #c4dffa 100%); min-width: 0; }
.aero .title { height: 44px; background: none; padding-left: 3px; }
.aero .logo { width: 24px; height: 26px; }
.aero .title h2 { font-size: 18px; }
.actl { display: flex; align-self: flex-start; height: 32px; border: 2px solid #5a6a7c; border-top: 0; border-radius: 0 0 6px 6px; overflow: hidden; margin-right: -4px; }
.actl button { width: 43px; background: linear-gradient(#e3edf7, #b6cadf 45%, #94aec9 50%, #c3d6ea); border-right: 1px solid #6d7f93; display: grid; place-items: center; }
.actl .a-x { width: 73px; border: 0; background: linear-gradient(#e6a08f, #cf6048 45%, #b52e17 50%, #d86b50); }
.a-x svg { width: 16px; height: 16px; }
.a-min { width: 20px; height: 8px; background: #fff; border: 2px solid #556; margin-top: 8px; }
.a-max { width: 18px; height: 14px; border: 3px solid #dde8f4; outline: 1px solid #93a8bf; }
.inner { border: 2px solid #6d8ba9; background: #c8daf0; }
.aero .headline { padding: 0 10px 0 3px; }
.aero .tools { height: 43px; padding: 0 4px 0 8px; border-width: 1px 1px 2px; border-color: #b9cce2; }
.aero .tools button { width: 37px; }
.aero .sep { height: 28px; margin: 0 5px 0 10px; }
.aero .pick select { width: 255px; font-size: 17px; line-height: 22px; }
.aero .pick::after { right: 4px; }
.aero .fw { color: #24406f; }
.aero .tabs { margin-top: 8px; height: 39px; padding-left: 6px; border-bottom-width: 2px; }
.aero .tabs button { height: 39px; padding: 6px 29px 0 9px; font-size: 17px; gap: 7px; }
.aero .bt { width: 19px; height: 24px; }
.tabs .dim { color: #9aa1aa; }
.aero .tabs .on { color: #2450a0; }
.aero .tabs .on::before { inset: 0 25px 0 0; border-color: #8db0dd; border-radius: 4px 0 0 0; border-top-width: 2px; }
.aero .tabs .on::after { right: 14px; width: 20px; border-width: 2px; border-color: #8db0dd; border-radius: 0 5px 0 0; transform: skewX(16deg); }
.key { background: linear-gradient(#eff7ff, #c8daf0 32%); border-width: 0 0 2px; }
.keytop { display: flex; align-items: flex-start; padding: 42px 60px 0 43px; height: 246px; white-space: nowrap; }
.keytop .acts { display: flex; flex-direction: column; gap: 35px; }
.key .btn { width: 186px; gap: 12px; }
.gray { background: linear-gradient(#e6e6e6, #dadada 48%, #a9a9a9 52%, #d8d8d8); border-color: #8b8b8b; border-bottom-width: 2px; color: #8f8f8f; }
.blue { background: linear-gradient(#e3f1fb, #dbe9fa 48%, #b7cdf2 52%, #cfe0fa); border: 3px solid #3d57e8; color: #222; }
.avgs { display: grid; row-gap: 22px; margin: 16px auto 0 46px; }
.demo { margin-top: 15px; gap: 8px; }
.chartbox { position: relative; }
.chartbox svg, .sta > svg, .dspmain > svg { display: block; width: 100%; }
.legend { position: absolute; top: 10px; right: 50px; display: grid; row-gap: 7px; }
.legend label { display: flex; align-items: center; gap: 7px; font-size: 18px; }
.legend i { width: 40px; height: 2px; }
.legend input[type=checkbox], .dsplegend input[type=checkbox] { border: 2px solid #777; border-right-color: #eee; border-bottom-color: #eee; }
.l-red { background: #f04040; }
.l-green { background: #2a8f3a; }
.l-blue { background: #3a44b0; }
.inner .status { margin-top: 4px; height: 31px; }
.inner .meter { width: 296px; height: 14px; margin-right: -4px; }
.inner .meter b { inset: -3px 0; }

/* viewer */
.sta { margin-top: 5px; border-color: #5c6167; background: #c8daf0; }
.sta .title { height: 39px; }
.sta .title h2 { font-size: 18px; color: #9a9a9a; }
.sta .logo { width: 25px; height: 25px; }
.sta .c-min::before, .sta .c-x::before, .sta .c-x::after { background: #8c8c8c; }
.sta .ctl { margin-right: -5px; }

/* charts */
svg text { font-family: "DejaVu Sans Condensed", "DejaVu Sans", sans-serif; fill: #26292e; }
#dsp text { font-family: "DejaVu Sans", sans-serif; }
.ax { stroke: #14181d; stroke-width: 2; fill: none; }
.gl { stroke: #bfc9cb; stroke-width: 1; fill: none; }

/* toolbox */
.dsp { border: 1px solid #8b8b8b; border-top: 2px solid #777; }
.dsp .title { height: 38px; padding-left: 9px; gap: 4px; }
.dsp .title h2 { font-size: 15px; }
.dsp .logo { width: 20px; height: 20px; }
.dsp .ctl button { width: 57px; }
.dsp .c-min::before { width: 11px; height: 1px; }
.dsp .c-max::before { width: 12px; height: 12px; border-color: #444; }
.dsp .c-x::before, .dsp .c-x::after { width: 15px; height: 1px; }
.dspbody { display: flex; font-size: 12px; font-family: "DejaVu Sans", sans-serif; }
aside { width: 248px; flex: none; padding: 27px 34px 30px 29px; display: flex; flex-direction: column; background: linear-gradient(90deg, #c5d8ef, #e9f3fe 85%); border-right: 2px solid #cdd3da; white-space: nowrap; }
aside .drop { width: auto; height: 26px; border-width: 2px; }
aside .drop select { font-size: 12px; padding-left: 6px; }
aside .drop::before { width: 20px; }
aside .drop::after { right: 5px; border-width: 5px 5px 0; margin-top: -3px; }
.red { margin-bottom: 6px; }
.red select { background: #e60000; color: #8a0808; }
aside p { margin: 14px 0 0; line-height: 26px; }
.shift { display: flex; align-items: center; justify-content: space-between; margin-top: 22px; }
p + .shift { margin-top: 19px; }
.dsp .spin { width: 91px; height: 23px; border-width: 2px; }
.dsp .spin input { text-align: right; padding: 0 5px 1px; }
.dsp .arr { width: 15px; gap: 0; }
.dsp .arr button::before { border-width: 0 3px 4px; }
.dsp .side .arr { flex-direction: row; width: 22px; }
.dsp .side .arr button::before { transform: rotate(-90deg); }
.dsp .side .arr button + button::before { transform: rotate(90deg); }
.res { margin-top: 25px; }
.dnd { margin-top: auto; height: 88px; padding: 5px 5px 0; line-height: 20px; background: #efefef; border: 2px solid #222; }
.dspmain { flex: 1; min-width: 0; background: #eff6fe; display: flex; flex-direction: column; }
.dsptools { display: flex; align-items: center; height: 46px; padding-left: 5px; white-space: nowrap; }
.dsptools button { width: 40px; height: 40px; display: grid; place-items: center; flex: none; }
.dsptools .act { background: #fbcf74; border: 2px solid #c99a3c; }
.dsptools .sep { height: 30px; margin: 0 5px 0 4px; flex: none; }
.redbar { width: 486px; height: 26px; margin-left: 113px; text-align: center; background: #e30000; border: 1px solid #a44; color: #3d0505; font: 18px/24px "DejaVu Sans Condensed", sans-serif; }
.dsptools .check { margin-left: 25px; gap: 9px; }
.dsp input[type=checkbox] { width: 15px; height: 15px; border-width: 2px; }
.dsp input[type=checkbox]:checked::before { width: 4px; height: 8px; border-width: 0 2px 2px 0; }
.dsplegend { align-self: center; display: flex; gap: 6px; margin-top: 10px; padding: 0 5px 0 3px; height: 30px; align-items: center; border: 2px solid #4a5360; font: 14px/20px "DejaVu Sans Condensed", sans-serif; white-space: nowrap; }
.dsplegend label { display: flex; align-items: center; gap: 4px; }
.dsplegend i { width: 17px; height: 2px; margin-right: 10px; }
.range { display: flex; align-items: center; margin: 20px 47px 13px 84px; white-space: nowrap; }
.range .spin { width: 97px; }
.range > i { flex: 1; height: 2px; background: #555e6a; margin: 0 8px 0 14px; }
.range > i + span + i { margin: 0 13px 0 8px; }
```

FILE: charts.js
```js
function rng(seed) {
  return function () {
    seed = (seed * 1664525 + 1013904223) % 4294967296;
    return seed / 4294967296;
  };
}
function put(id, html) { document.getElementById(id).innerHTML = html; }
function text(x, y, s, size, anchor, extra) {
  return `<text x="${x}" y="${y}" font-size="${size}" text-anchor="${anchor || 'middle'}" ${extra || ''}>${s}</text>`;
}
function turned(x, y, s, size) {
  return `<text transform="translate(${x} ${y}) rotate(-90)" font-size="${size}" text-anchor="middle">${s}</text>`;
}
function line(x1, y1, x2, y2, cls) { return `<path class="${cls}" d="M${x1} ${y1}L${x2} ${y2}"/>`; }
function trace(pts, color, width) {
  return `<polyline points="${pts.map(p => p[0].toFixed(1) + ',' + p[1].toFixed(1)).join(' ')}" fill="none" stroke="${color}" stroke-width="${width}" stroke-linejoin="round"/>`;
}
function pairs(list) {
  const out = [];
  for (let i = 0; i < list.length; i += 2) out.push([list[i], list[i + 1]]);
  return out;
}
function interp(pts, x) {
  for (let i = 1; i < pts.length; i++) {
    if (x <= pts[i][0]) {
      const a = pts[i - 1], b = pts[i];
      return a[1] + (b[1] - a[1]) * (x - a[0]) / (b[0] - a[0]);
    }
  }
  return pts[pts.length - 1][1];
}

/* Three-component live recording */
(function () {
  let s = '';
  for (let i = 0; i <= 20; i++) {
    const y = 399.7 + i * 22.62, v = (2 - i * 0.2);
    if (i > 0 && i < 20) s += line(130, y, 1203, y, 'gl');
    s += line(123, y, 130, y, 'ax') + text(119, y + 5, (Math.abs(v) < 0.01 ? 0 : v).toFixed(1), 15, 'end');
  }
  for (let i = 0; i < 5; i++) {
    const x = 130 + i * 215.2;
    if (i) s += line(x, 400, x, 852, 'gl');
    s += line(x, 852, x, 858, 'ax') + text(x, 875, 29 + i, 15);
  }
  const map = l => pairs(l).map(p => [p[0] * 0.8217 - 17.9, p[1] * 0.46604 + 369.4]);
  const ax = [180,490,188,575,193,690,203,822,209,732,212,745,220,600,232,510,240,435,249,388,253,475,259,398,268,490,278,590,283,710,290,792,297,705,300,730,306,620,315,510,327,385,333,478,340,420,347,450,355,520,361,700,368,840,374,742,378,735,385,620,392,505,400,430,410,396,414,515,420,392,426,480,437,540,443,720,450,822,456,735,460,762,465,620,472,560,480,500,492,396,497,495,502,403,510,480,520,560,526,660,533,800,538,710,541,725,550,610,560,530,572,490,582,420,586,500,592,422,600,500,610,560,620,650,628,752,633,668,638,710,648,610,655,560,662,500,674,425,679,500,684,416,692,510,702,560,712,700,718,806,723,718,727,777,735,650,742,520,750,430,760,360,764,485,769,363,776,470,786,640,799,857,804,740,808,773,815,600,822,560,832,440,843,385,848,490,855,371,862,470,872,600,885,880,890,815,894,830,900,640,908,540,918,440,931,343,935,450,941,330,948,430,960,540,968,760,975,933,982,810,990,700,998,560,1008,450,1021,354,1027,425,1033,363,1040,440,1050,510,1060,730,1068,900,1073,775,1078,800,1086,640,1095,540,1103,400,1111,335,1116,465,1121,380,1130,440,1138,610,1153,806,1158,690,1163,738,1172,580,1180,420,1190,360,1194,410,1199,398,1206,500,1216,600,1228,774,1233,710,1239,742,1248,600,1257,500,1271,356,1276,445,1283,381,1292,480,1302,680,1313,840,1319,735,1323,788,1332,640,1340,480,1354,316,1358,440,1362,390,1372,560,1382,620,1394,772,1401,675,1406,730,1415,590,1425,510,1434,470,1443,402,1447,495,1453,395,1460,480,1470,600,1478,740,1484,773,1486,745];
  const ay = [180,495,188,482,196,540,201,660,206,697,214,625,222,570,234,505,246,525,252,500,257,570,264,500,271,482,280,530,286,625,292,677,298,622,306,610,312,560,322,510,328,478,334,530,348,500,358,520,365,610,370,670,376,630,385,600,392,510,400,500,412,520,418,560,425,510,435,487,442,520,448,640,452,668,458,618,466,600,476,520,486,500,492,468,500,540,512,495,522,520,530,640,534,680,540,630,552,590,562,530,578,528,586,500,592,530,604,515,612,505,620,560,626,620,630,655,638,600,648,580,660,520,676,500,680,555,690,515,704,515,712,600,718,645,726,615,732,618,742,515,758,512,766,520,775,500,784,475,792,540,800,696,806,650,814,600,822,560,830,500,840,530,848,470,856,540,866,460,874,465,880,680,888,722,898,700,904,560,912,500,918,476,926,530,934,510,940,540,950,480,960,476,968,560,978,753,986,660,994,590,1004,510,1014,520,1024,465,1028,515,1038,495,1052,498,1060,600,1070,733,1078,670,1086,620,1096,550,1104,490,1112,450,1118,520,1128,490,1138,475,1146,560,1154,715,1162,660,1172,590,1180,500,1192,440,1198,495,1208,500,1218,560,1228,660,1236,630,1244,640,1254,540,1264,500,1274,455,1280,500,1292,490,1302,560,1314,695,1320,660,1330,640,1340,540,1348,470,1356,430,1364,510,1378,500,1386,560,1398,700,1406,635,1414,620,1424,520,1434,500,1445,480,1452,520,1460,478,1470,530,1480,660,1486,687];
  const r = rng(7), az = [];
  const dips = [206,292,370,452,534,630,718,800,888,978,1070,1154,1228,1314,1398,1484];
  for (let x = 180; x <= 1486; x += 4) {
    let y = 547 + (r() - 0.5) * 26 + Math.sin(x / 4.3) * 10;
    dips.forEach(d => {
      if (Math.abs(x - d) < 9) y += 38 * (1 - Math.abs(x - d) / 9);
      if (Math.abs(x - d - 46) < 14) y += (r() - 0.5) * 50;
    });
    az.push(x, y);
  }
  s += trace(map(ax), '#f5141e', 1.6) + trace(map(ay), '#118330', 1.6) + trace(map(az), '#10138f', 1.6);
  s += line(130, 399, 130, 853, 'ax') + line(129, 852, 1203, 852, 'ax');
  s += text(663, 904, 'seconds', 16) + turned(67, 625, 'acceleration (g)', 16);
  put('key', s);
})();

/* STA/LTA viewer */
(function () {
  let s = '';
  for (let i = 0; i <= 15; i++) {
    const y = 77.7 + i * 24.8;
    s += line(124, y, 594, y, 'gl') + line(114, y, 123, y, 'ax') + text(107, y + 5, (1.75 - i * 0.05).toFixed(2) + 'E-5', 14, 'end');
  }
  for (let i = 0; i <= 11; i++) {
    const y = 538.7 + i * 30.6;
    s += line(124, y, 594, y, 'gl') + line(114, y, 123, y, 'ax') + text(109, y + 5, (1.35 - i * 0.05).toFixed(2), 14, 'end');
  }
  for (let i = 0; i < 5; i++) {
    const a = 187 + i * 94.3, b = 183.3 + i * 94.3;
    s += line(a, 68, a, 451, 'gl') + line(a, 452, a, 459, 'ax') + text(a + 1, 480, 196 + i, 14);
    s += line(b, 532, b, 893, 'gl') + line(b, 894, b, 901, 'ax') + text(b + 1, 921, 196 + i, 14);
  }
  const k = pairs([320,435,338,452,352,475,362,430,380,435,402,458,420,450,432,458,436,440,446,458,456,424,472,432,490,458,512,450,530,480,545,485,560,490,575,460,592,412,612,408,626,408,630,368,652,398,676,388,690,420,716,455,738,482,746,462,768,493,800,482,824,493,845,475,853,442,880,455,916,445,940,508,964,525,974,505,1000,535,1022,525,1044,542,1046,505,1070,518,1080,480,1108,470,1122,493,1138,480,1155,498,1180,480,1195,450,1212,432,1245,465,1268,510,1290,520,1308,532,1320,475,1338,475,1374,465,1380,438,1410,445,1436,458,1444,435,1450,445]);
  const r = rng(3), up = [], low = [];
  for (let x = 320; x <= 1450; x += 4) {
    const y = interp(k, x) + (r() - 0.5) * 14;
    up.push([x * 0.41697 - 9.75, y * 0.64386 - 20.2]);
    low.push([(x - 4) * 0.41697 - 9.75, (1075 + (y - 368) * 0.93) * 0.64386 - 20.2]);
  }
  const lta = pairs([320,507,350,508,570,506,650,499,750,503,920,500,1180,502,1210,499,1460,499]).map(p => [p[0] * 0.41697 - 9.75, p[1] * 0.64386 - 20.2]);
  s += trace(up, '#8080f8', 2) + trace(lta, '#7e8488', 1.5) + trace(low, '#f98412', 2.2);
  s += line(594, 266, 599, 272, 'ax');
  s += line(123, 68, 123, 453, 'ax') + line(122, 452, 596, 452, 'ax') + line(123, 531, 123, 895, 'ax') + line(122, 894, 596, 894, 'ax');
  s += '<path d="M519 101.500H538" stroke="#8484f4" stroke-width="2"/><path d="M519 126H538" stroke="#7e8488" stroke-width="2"/>';
  s += text(548, 107, 'rSTA', 16, 'start') + text(548, 132, 'rLTA', 16, 'start');
  s += text(362, 946, 'seconds', 16) + turned(43, 255, 'acceleration energy', 16) + turned(41, 711, 'rSTA/rLTA', 16);
  put('sta', s);
})();

/* Filtered record, three axes */
(function () {
  let s = '';
  const charts = [
    { top: 116, base: 303, zero: 214.7, step: 19.75, hi: 5, lo: -4, name: 'x-axis', seed: 11,
      env: [0,1,6,1.2,9,3,9.6,6,10.5,3,12,4,14,7,15,6,16,8,17,14,18,17,19,14,20,20,21,15,22,21,22.7,29,23.4,18,24.5,19,25.2,20,26,10,27.5,19,29,12,30.5,14,32,9,34,7,36.4,8,39,4.5,42,6,44.5,6,46,3.5,50,5,52,4,59.5,3] },
    { top: 377, base: 565, zero: 467, step: 21.9, hi: 4, lo: -4, name: 'y-axis', seed: 23,
      env: [0,1.2,6,1.3,9,4,12,3.5,14,6,16,7,18,9,19,15,20.5,19,21.8,23,23,16,24,14,25.1,26,26,16,27.5,18,29,13,30,10,31,9,32,11,33.5,10,34.5,13,36,6,38.5,8,40,4,42.5,8,44,5,46.5,6,49,4,53,5,59.5,2.5] },
    { top: 639, base: 827.7, zero: 737, step: 26, hi: 3, lo: -3, name: 'z-axis', seed: 37,
      env: [0,1.2,6,2.2,9,4,12,4,14,6,16,6,17,7,18.8,14,20,14,21,12,22.8,22,24,14,26,8,27,13,29,7,31,11,32.5,8,34,5,36,5,38,7,40,4,44,4,50,4,59.5,2.5] }
  ];
  charts.forEach(c => {
    const z = c.seed === 37;
    for (let i = c.lo; i <= c.hi; i++) {
      const y = c.zero - i * c.step;
      s += `<path d="M341 ${y}H1613" stroke="#dde0e8"/>` + line(333, y, 339, y, 'ax') + text(327, y + 4, String(+(i * 0.005).toFixed(3)), 11, 'end');
    }
    for (let i = 0; i < 12; i++) {
      const x = 340 + i * 107.1;
      if (i) s += `<path d="M${x} ${c.top}V${c.base}" stroke="#dde0e8" stroke-width="2"/>`;
      s += line(x, c.base, x, c.base + 6, 'ax') + text(x + 1, c.base + 21, i * 5, 11);
    }
    const r = rng(c.seed), env = pairs(c.env), pts = [];
    let ph = 0, f = 1.8, ph2 = 1, amp = 1, target = 1, prev = 0;
    for (let t = 0; t < 59.5; t += 0.035) {
      const e = interp(env, t), late = t > 34;
      f += (r() - 0.5) * 0.6;
      f = Math.max(late ? 0.5 : 1, Math.min(late ? 1.3 : 2.5, f));
      ph += f * 0.035 * 6.283;
      ph2 += (3 + r() * 2) * 0.035 * 6.283;
      const q = Math.sin(ph), sign = q > 0 ? 1 : 0;
      if (sign !== prev) { target = 0.2 + r() * 0.8; prev = sign; }
      amp += (target - amp) * 0.4;
      const noise = (r() - 0.5) * (z ? 4 : 2.4) + (r() - 0.5) * (late ? 1.6 : 0);
      const v = e * (q * amp + Math.sin(ph2) * (0.14 + r() * 0.12)) * (t < 8 ? 0.5 : late ? 0.6 : 0.95) + noise;
      const y = c.zero - v / 5 * c.step;
      pts.push([340 + t * 21.42, Math.max(c.top, Math.min(c.base - 1, y))]);
    }
    s += trace(pts, '#e0161c', 1.5);
    s += `<path d="M339 ${c.top}V${c.base}H1613" fill="none" stroke="#111" stroke-width="3"/>`;
    s += text(980, c.base + 41, 'seconds', 13) + text(1627, c.top - 13, c.name, 14, 'end', 'font-weight="bold"') + turned(286, (c.top + c.base) / 2 - 3, 'acceleration (g)', 12);
  });
  put('dsp', s);
})();

/* Trigger mode diagram */
(function () {
  const X = x => +(x * 0.8217 - 11.4).toFixed(1), Y = y => +(y * 0.39245 + 377.8).toFixed(1);
  const wave = pairs([205,0,212,3,217,-8,222,10,228,-12,233,8,240,5,247,25,252,-15,256,32,260,-32,265,30,268,-28,272,-60,277,70,280,-50,284,30,289,-22,294,30,298,-80,301,135,304,-133,307,90,310,-30,314,20,318,-45,322,60,327,118,330,-90,333,80,336,-70,340,40,345,20,350,-60,354,20,360,65,366,-40,370,-65,374,135,377,-65,382,20,388,35,393,-50,398,20,404,85,407,-45,412,45,418,20,424,-68,428,30,434,-20,438,60,442,-45,446,50,450,-55,454,50,456,-65,462,20,467,40,473,-20,478,30,484,-20,490,20,496,-18,502,25,508,20,514,-50,520,30,526,-20,532,15,538,-30,546,20,552,55,560,-40,568,30,576,-20,582,28,590,-28,597,50,604,-30,612,30,620,-25,628,15,636,-12,645,20,654,-10,662,25,669,-20,678,15,690,12,705,-20,715,18,725,-20,738,25,750,-22,760,8,768,0]);
  const poly = (list, color) => `<path d="M${pairs(list).map(p => X(p[0]) + ' ' + Y(p[1])).join('L')}" fill="none" stroke="${color}" stroke-width="2.200" stroke-dasharray="5 4"/>`;
  const arrow = (x1, x2, y, a, b) => {
    let o = `<path d="M${X(x1)} ${Y(y)}H${X(x2)}" stroke="#333" stroke-width="2"/>`;
    if (a) o += `<path d="M${X(x1)} ${Y(y)}l10 -5v10z" fill="#222"/>`;
    if (b) o += `<path d="M${X(x2)} ${Y(y)}l-10 -5v10z" fill="#222"/>`;
    return o;
  };
  const down = (x, y1, y2) => `<path d="M${X(x)} ${Y(y1)}V${Y(y2)}" stroke="#222" stroke-width="2"/><path d="M${X(x)} ${Y(y2)}l-5 -9h10z" fill="#222"/>`;
  const red = '#ee3338', green = '#1da04e', blue = '#3a3494';
  let s = '';
  [343, 856].forEach(c => {
    s += `<path d="M${X(121)} ${Y(c)}H${X(791)}" stroke="#555" stroke-width="3"/>`;
    s += trace(wave.map(p => [X(p[0]), Y(c + p[1])]), '#333', 1.5);
  });
  s += poly([273,207,153,207,153,481,273,481,273,430], red) + poly([273,207,497,207,497,285], green) + poly([497,395,497,481,273,481], green);
  s += poly([534,285,534,207,723,207,723,481,534,481,534,400], red);
  s += poly([273,718,153,718,153,993,273,993,273,950], red) + poly([534,718,723,718,723,993,534,993,534,920], red);
  s += poly([296,785,506,785,506,927,296,927,296,785], green) + poly([448,961,448,750,506,750,506,961,448,961], blue);
  s += down(273, 165, 282) + down(273, 665, 778) + down(534, 665, 783) + `<circle cx="${X(273)}" cy="${Y(294)}" r="3.500" fill="#d22"/>`;
  s += arrow(153, 192, 527, 1, 0) + arrow(234, 273, 527, 0, 1) + arrow(273, 312, 527, 1, 0) + arrow(456, 497, 527, 0, 1) + arrow(534, 606, 527, 1, 0) + arrow(650, 723, 527, 0, 1);
  s += arrow(153, 192, 1039, 1, 0) + arrow(234, 273, 1039, 0, 1) + arrow(534, 606, 1039, 1, 0) + arrow(650, 723, 1039, 0, 1);
  s += `<path d="M${X(502)} ${Y(527)}H${X(530)}" stroke="#333" stroke-width="2" stroke-dasharray="2 2"/>`;
  s += text(X(273), Y(133) + 6, 'g threshold', 16) + text(X(791), Y(133) + 6, 'Threshold mode', 16, 'end', 'font-weight="bold"') + text(X(791), Y(643) + 6, 'STA/LTA mode', 16, 'end', 'font-weight="bold"');
  s += text(X(213), Y(527) + 6, 'PEM', 16) + text(X(384), Y(527) + 5, 'min event time', 15) + text(X(628), Y(527) + 6, 'PET', 16) + text(X(213), Y(1039) + 6, 'PEM', 16) + text(X(628), Y(1039) + 6, 'PET', 16);
  s += text(X(269), Y(645), 'a', 20) + text(X(278), Y(656), 't', 12) + text(X(529), Y(645), 'a', 20) + text(X(541), Y(656), 'dt', 12);
  s += `<text x="${X(357)}" y="${Y(755) + 6}" font-size="17" font-weight="bold" style="fill:${green}">LTA</text><path d="M${X(397)} ${Y(755)}h16m-6 -5l6 5l-6 5" fill="none" stroke="${green}" stroke-width="3"/>`;
  s += `<text x="${X(445)}" y="${Y(718) + 6}" font-size="17" font-weight="bold" style="fill:${blue}">STA</text><path d="M${X(488)} ${Y(718)}h18m-6 -5l6 5l-6 5" fill="none" stroke="${blue}" stroke-width="3"/>`;
  put('diagram', s);
})();

/* Satellite view */
(function () {
  const r = rng(99);
  const P = (pts, fill, extra) => `<polygon points="${pts}" fill="${fill}" ${extra || ''}/>`;
  const pick = a => a[Math.floor(r() * a.length)];
  let s = `<defs><filter id="grain" x="0" y="0" width="100%" height="100%"><feTurbulence type="fractalNoise" baseFrequency="0.07 0.07" numOctaves="4" seed="4"/><feColorMatrix values="0 0 0 0 0.08  0 0 0 0 0.09  0 0 0 0 0.07  2 1.2 0 0 -1.2"/></filter>
  <filter id="light" x="0" y="0" width="100%" height="100%"><feTurbulence type="fractalNoise" baseFrequency="0.08 0.08" numOctaves="3" seed="9"/><feColorMatrix values="0 0 0 0 0.66  0 0 0 0 0.64  0 0 0 0 0.6  2.6 1 0 0 -1.95"/></filter>
  <linearGradient id="rib" x1="0" y1="0" x2="0" y2="1"><stop offset="0" stop-color="#f4f4f0"/><stop offset=".65" stop-color="#dfded8"/><stop offset="1" stop-color="#a3a19a"/></linearGradient>
  <pattern id="ribs" width="400" height="50" patternUnits="userSpaceOnUse" patternTransform="skewY(-16)"><rect width="400" height="50" fill="url(#rib)"/></pattern>
  <pattern id="ribs2" width="400" height="36" patternUnits="userSpaceOnUse" patternTransform="skewY(-58)"><rect width="400" height="36" fill="#e2e1dc"/><rect y="24" width="400" height="12" fill="#8a8882"/></pattern>
  <pattern id="ribs3" width="400" height="42" patternUnits="userSpaceOnUse" patternTransform="skewY(-40)"><rect width="400" height="42" fill="#8f8a85"/><rect y="34" width="400" height="8" fill="#514e4b"/></pattern></defs>`;
  s += '<rect x="23" y="17" width="1521" height="1423" fill="#605f58"/>';
  s += P('400,17 940,17 900,250 930,560 800,640 640,560 520,420 470,230', '#4b4e40') + P('690,1050 800,1060 930,1300 930,1440 800,1440', '#34402b') + P('560,200 640,160 600,330 530,300', '#323c2a') + P('740,330 840,320 900,640 760,560', '#474f37') + P('1190,1170 1300,1180 1320,1440 1200,1440', '#3b4033') + P('700,80 800,100 830,240 740,280', '#75685a') + P('1300,1050 1400,1060 1480,1440 1330,1440', '#6f685a') + P('23,200 140,230 80,440 23,480', '#494c3f');
  for (let i = 0; i < 420; i++) {
    const x = 23 + r() * 1521, y = 17 + r() * 1423;
    s += `<ellipse cx="${x | 0}" cy="${y | 0}" rx="${6 + r() * 12 | 0}" ry="${12 + r() * 24 | 0}" fill="${pick(['#2d3527', '#363e2f', '#434739', '#2b2e27'])}" opacity=".8"/>`;
  }
  for (let i = 0; i < 340; i++) {
    const left = r() < 0.3, x = left ? 40 + r() * 200 : 930 + r() * 560, y = left ? 720 + r() * 300 : 240 + r() * 700;
    const w = 8 + r() * 38, h = 14 + r() * 46;
    s += `<rect x="${x | 0}" y="${y | 0}" width="${w | 0}" height="${h | 0}" transform="rotate(${left ? 14 : -6} ${x | 0} ${y | 0})" fill="${pick(['#8d8a84', '#a9a8a3', '#6d6b66', '#c4c5c2', '#7b7068', '#4a4945', '#5a5753', '#3c3d39'])}"/>`;
  }
  s += '<rect x="23" y="17" width="1521" height="1423" filter="url(#grain)" opacity=".7"/><rect x="23" y="17" width="1521" height="1423" filter="url(#light)" opacity=".5"/>';
  const road = (d, w, c) => `<path d="${d}" fill="none" stroke="${c}" stroke-width="${w}"/>`;
  s += road('M690 17L760 110L830 290L920 600L1000 860L1080 1000L1544 940', 22, '#7c7872') + road('M1360 120L1430 400L1490 700L1544 930', 32, '#7f7b75') + road('M1010 940L1060 1130L1130 1440', 22, '#7c7872') + road('M1300 230L1290 1000', 12, '#716e68') + road('M700 960L880 1440', 16, '#827d75') + road('M240 690L270 900L410 1240L480 1440', 34, '#736e69') + road('M23 600L120 610L240 710', 34, '#6d6a65') + road('M130 900L150 1180L190 1440', 26, '#736f6a') + road('M670 640L820 920L870 1100', 14, '#9c9687') + road('M350 290L480 230L560 17', 22, '#7e7a73') + road('M480 230L640 560L560 800', 14, '#736f68');
  s += P('85,17 165,17 330,290 450,520 575,800 700,1130 800,1440 715,1440 600,1150 480,830 370,560 270,340', '#7b7773');
  s += road('M120 17L300 310L410 540L530 820L650 1130L755 1440', 5, '#50534a') + road('M142 17L325 320L430 540L552 820L675 1130L778 1440', 3, '#a5a19b') + road('M104 17L282 320L392 545L506 825L626 1140L732 1440', 3, '#9b9791');
  s += P('350,50 415,110 375,255 315,150', '#575654', 'stroke="#dcdcd8" stroke-width="4"') + P('150,250 295,480 225,695 65,440', '#63615d') + P('165,350 200,380 240,600 180,500', '#53514e');
  s += P('665,165 735,290 640,520 578,380', '#6d6b68', 'stroke="#c6c5c0" stroke-width="4"') + P('668,285 686,315 668,362 645,330', '#302f2e') + P('620,350 650,400 630,410 612,380', '#8f8d89');
  s += P('300,500 410,670 385,715 288,530', '#c9d0cf') + P('343,570 362,600 345,640 328,610', '#a3503d');
  s += P('430,735 470,800 590,1110 580,1190 540,1215 520,1195 388,810', 'url(#ribs)') + P('345,760 525,1210 520,1290 490,1305 302,860', 'url(#ribs3)');
  s += P('600,1190 640,1340 560,1440 490,1440 480,1350', '#d5d7ce') + P('23,690 60,780 106,1050 23,1115', '#a8a29a') + P('265,1050 292,1265 212,1310 178,1100', '#99928a') + P('388,1150 440,1440 335,1440 312,1200', '#a39c93') + P('150,1270 190,1440 80,1440 78,1320', '#9f9990') + P('300,900 370,1090 320,1130 270,960', '#aca795') + P('130,1150 160,1230 100,1290 80,1260', '#8d9ca0') + P('48,1120 70,1120 95,1300 78,1300', '#cac6bd');
  s += P('810,590 892,775 832,892 762,710', 'url(#ribs2)') + P('745,650 790,720 740,800 715,700', '#2e2e2e') + P('770,745 840,900 800,930 748,790', '#6e6c67') + P('680,800 740,880 716,925', '#b8b27e') + P('690,790 750,860 720,900', '#3a3a36') + P('785,880 810,960 740,1040 718,980', '#827e77') + P('600,600 640,580 630,690 590,680', '#70769a') + P('450,400 490,340 545,450 520,520', '#85847f') + P('540,600 560,600 640,720 590,740', '#84858a') + P('840,850 930,830 1000,950 840,950', '#2b3028');
  const blocks = [[840,965,155,95,'#716b66'],[872,1065,170,70,'#504e4b'],[902,1135,158,100,'#67625e'],[970,1305,138,75,'#75726e'],[1115,1078,92,72,'#74726e'],[1135,1095,58,40,'#4c4b49'],[1262,1062,36,108,'#bdb8b0'],[1130,1185,45,90,'#615f59'],[1145,1280,36,160,'#96928a'],[1160,465,116,85,'#6f5a4f'],[1165,575,115,95,'#c9c7be'],[990,580,155,65,'#a4a9aa'],[1005,680,80,60,'#a19c94'],[1160,705,122,65,'#b0b4b4'],[1018,765,108,75,'#b3aca3'],[1312,690,150,75,'#67635f'],[1318,575,110,70,'#695d54'],[1320,820,165,75,'#6b6865'],[945,360,180,42,'#797876'],[1058,440,40,115,'#96a3a9'],[1305,230,40,280,'#a8a399'],[1190,220,60,140,'#979a9a'],[920,340,40,170,'#85827b'],[980,480,25,160,'#9b978f'],[990,410,36,60,'#73564b'],[1410,1040,60,380,'#837d74'],[1470,1120,74,140,'#8d8882'],[1055,250,55,70,'#ddd'],[1130,390,160,60,'#6a645f']];
  blocks.forEach(b => { s += `<rect x="${b[0] + 6}" y="${b[1] + 14}" width="${b[2]}" height="${b[3]}" fill="#292927" transform="rotate(-3 ${b[0]} ${b[1]})"/><rect x="${b[0]}" y="${b[1]}" width="${b[2]}" height="${b[3]}" fill="${b[4]}" transform="rotate(-3 ${b[0]} ${b[1]})"/>`; });
  for (let i = 0; i < 900; i++) {
    const x = 23 + r() * 1521, y = 17 + r() * 1423;
    s += `<rect x="${x | 0}" y="${y | 0}" width="${2 + r() * 6 | 0}" height="${4 + r() * 12 | 0}" fill="${pick(['#d8d8d4', '#222420', '#b4b2ac', '#38403a', '#6b5a50'])}" opacity=".45"/>`;
  }
  s += '<rect x="23" y="17" width="1521" height="1423" filter="url(#grain)" opacity=".25"/>';
  put('sat', s);
})();
```
